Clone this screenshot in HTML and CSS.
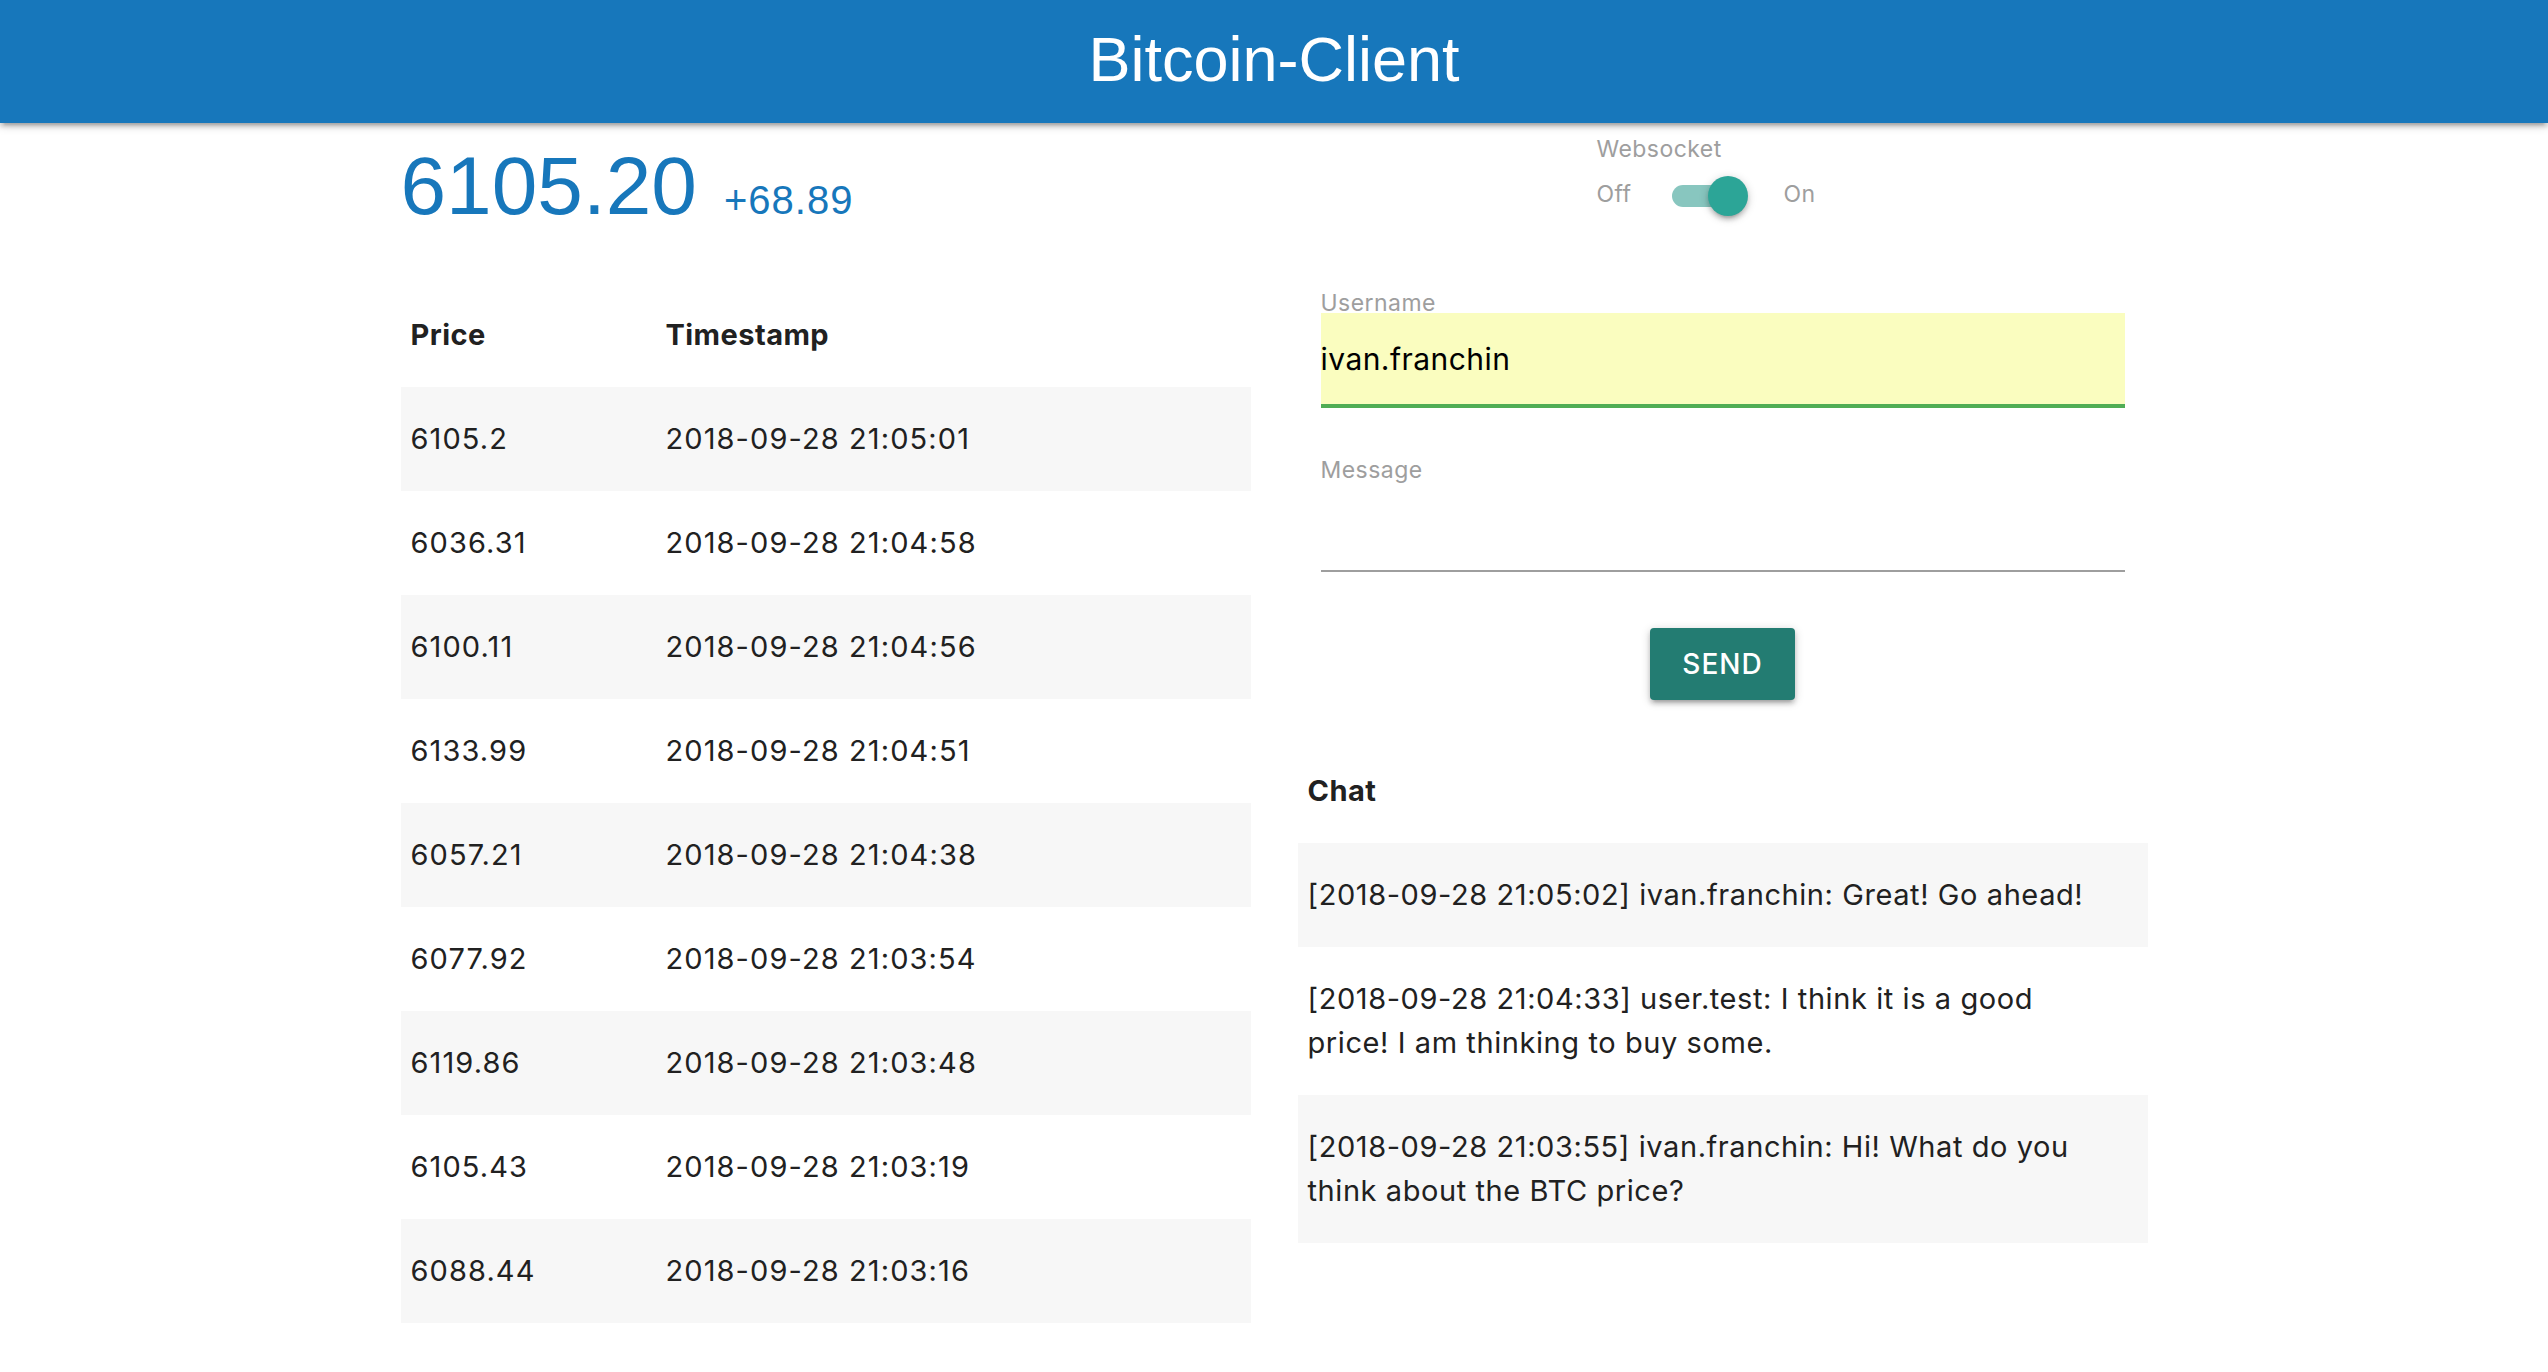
FILE: index.html
```html
<!DOCTYPE html>
<html lang="en">
<head>
<meta charset="utf-8">
<title>Bitcoin-Client</title>
<link rel="stylesheet" href="styles.css">
</head>
<body>
<header class="nav">
  <div class="brand">Bitcoin-Client</div>
</header>
<main class="container">
  <section class="row top">
    <div class="col">
      <h3 class="price">6105.20<span class="delta">+68.89</span></h3>
    </div>
    <div class="col">
      <div class="ws">
        <div class="ws-label">Websocket</div>
        <div class="switch">
          <span class="sw-text">Off</span>
          <span class="lever"><span class="thumb"></span></span>
          <span class="sw-text">On</span>
        </div>
      </div>
    </div>
  </section>
  <section class="row main">
    <div class="col">
      <table class="striped prices">
        <thead>
          <tr><th class="c-price">Price</th><th>Timestamp</th></tr>
        </thead>
        <tbody>
          <tr><td>6105.2</td><td>2018-09-28 21:05:01</td></tr>
          <tr><td>6036.31</td><td>2018-09-28 21:04:58</td></tr>
          <tr><td>6100.11</td><td>2018-09-28 21:04:56</td></tr>
          <tr><td>6133.99</td><td>2018-09-28 21:04:51</td></tr>
          <tr><td>6057.21</td><td>2018-09-28 21:04:38</td></tr>
          <tr><td>6077.92</td><td>2018-09-28 21:03:54</td></tr>
          <tr><td>6119.86</td><td>2018-09-28 21:03:48</td></tr>
          <tr><td>6105.43</td><td>2018-09-28 21:03:19</td></tr>
          <tr><td>6088.44</td><td>2018-09-28 21:03:16</td></tr>
        </tbody>
      </table>
    </div>
    <div class="col">
      <div class="field">
        <label class="field-label" for="username">Username</label>
        <input id="username" class="input valid" type="text" value="ivan.franchin">
      </div>
      <div class="field field-msg">
        <label class="field-label" for="message">Message</label>
        <input id="message" class="input" type="text" value="">
      </div>
      <div class="actions">
        <button class="btn" type="button">Send</button>
      </div>
      <table class="striped chat">
        <thead>
          <tr><th>Chat</th></tr>
        </thead>
        <tbody>
          <tr><td>[2018-09-28 21:05:02] ivan.franchin: Great! Go ahead!</td></tr>
          <tr><td>[2018-09-28 21:04:33] user.test: I think it is a good price! I am thinking to buy some.</td></tr>
          <tr><td>[2018-09-28 21:03:55] ivan.franchin: Hi! What do you think about the BTC price?</td></tr>
        </tbody>
      </table>
    </div>
  </section>
</main>
</body>
</html>
```
FILE: styles.css
```css
html, body {
  margin: 0;
  padding: 0;
  background: #ffffff;
}

body {
  font-family: Inter, "Liberation Sans", sans-serif;
  font-size: 29px;
  line-height: 44px;
  letter-spacing: 0.45px;
  color: #212121;
}

.nav {
  height: 123px;
  background: #1777bb;
  display: flex;
  align-items: center;
  justify-content: center;
  box-shadow: 0 4px 4px 0 rgba(0,0,0,0.14), 0 6px 2px -4px rgba(0,0,0,0.12), 0 2px 10px 0 rgba(0,0,0,0.2);
  position: relative;
  z-index: 2;
}

.brand {
  font-family: "Liberation Sans", Arial, sans-serif;
  font-size: 63px;
  line-height: 63px;
  letter-spacing: 0;
  color: #ffffff;
  margin-top: -4px;
}

.container {
  width: 1747px;
  margin: 0 auto;
}

.row {
  display: flex;
  gap: 47px;
}

.col {
  width: 850px;
  flex: none;
}

.top {
  height: 160px;
}

.price {
  margin: 21px 0 0;
  font-family: "Liberation Sans", Arial, sans-serif;
  font-weight: 400;
  font-size: 82px;
  line-height: 84px;
  letter-spacing: 0;
  color: #1777bb;
}

.delta {
  font-size: 40px;
  line-height: 1;
  letter-spacing: 1px;
  margin-left: 27px;
}

.ws {
  margin-left: 299px;
  padding-top: 15px;
}

.ws-label {
  font-size: 23px;
  line-height: 23px;
  color: #9e9e9e;
}

.switch {
  margin-top: 15px;
  height: 40px;
  display: flex;
  align-items: center;
}

.sw-text {
  font-size: 23px;
  line-height: 23px;
  color: #9e9e9e;
  margin-top: -4px;
}

.lever {
  position: relative;
  width: 72px;
  height: 22px;
  border-radius: 11px;
  background: #88c6bf;
  margin: 0 40px 0 40px;
}

.thumb {
  position: absolute;
  top: -9px;
  right: -4px;
  width: 40px;
  height: 40px;
  border-radius: 50%;
  background: #2ca597;
  box-shadow: 0 4px 4px 0 rgba(0,0,0,0.14), 0 6px 2px -4px rgba(0,0,0,0.12), 0 2px 10px 0 rgba(0,0,0,0.2);
}

table {
  width: 100%;
  border-collapse: collapse;
  border-spacing: 0;
}

th, td {
  padding: 30px 10px;
  line-height: 44px;
  text-align: left;
  vertical-align: middle;
}

th {
  font-weight: 700;
}

td {
  font-weight: 400;
}

.striped tbody tr:nth-child(odd) {
  background: #f7f7f7;
}

.c-price {
  width: 235px;
}

.prices td {
  letter-spacing: 1.1px;
}

.chat td {
  padding-right: 40px;
  letter-spacing: 0.58px;
}

.field {
  padding: 0 23px;
}

.field:first-child {
  padding-top: 10px;
}

.field-label {
  display: block;
  font-size: 23px;
  line-height: 20px;
  color: #9e9e9e;
}

.input {
  display: block;
  box-sizing: border-box;
  width: 100%;
  height: 91px;
  margin: 0;
  padding: 0;
  border: none;
  border-bottom: 2px solid #9e9e9e;
  border-radius: 0;
  background: transparent;
  font-family: Inter, "Liberation Sans", sans-serif;
  font-size: 30px;
  letter-spacing: 0.45px;
  color: #000000;
  outline: none;
}

.input.valid {
  height: 95px;
  background: #fafdbf;
  border-bottom: 4px solid #50ad55;
}

.field-msg {
  margin-top: 52px;
}

.field-msg .input {
  height: 92px;
}

.actions {
  display: flex;
  justify-content: center;
  margin-top: 56px;
}

.btn {
  height: 72px;
  padding: 0 32px;
  border: none;
  border-radius: 4px;
  background: #237c72;
  color: #ffffff;
  font-family: Inter, "Liberation Sans", sans-serif;
  font-size: 28px;
  font-weight: 500;
  letter-spacing: 1px;
  text-transform: uppercase;
  box-shadow: 0 4px 4px 0 rgba(0,0,0,0.14), 0 6px 2px -4px rgba(0,0,0,0.12), 0 2px 10px 0 rgba(0,0,0,0.2);
}

.chat {
  margin-top: 39px;
}
```
